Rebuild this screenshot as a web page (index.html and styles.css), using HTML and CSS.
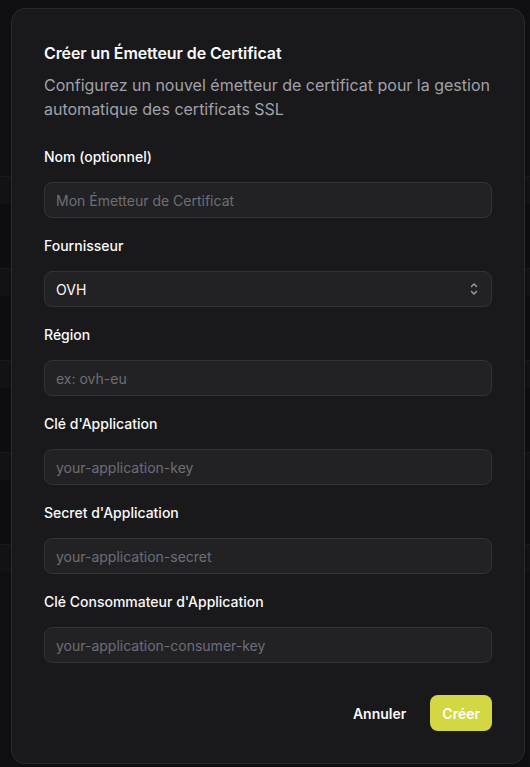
FILE: index.html
```html
<!DOCTYPE html>
<html lang="fr">
<head>
    <meta charset="UTF-8">
    <meta name="viewport" content="width=device-width, initial-scale=1.0">
    <title>Émetteurs de certificats</title>
    <link rel="stylesheet" href="styles.css">
</head>
<body>
    <div class="page">
        <div class="page-row"></div>
        <div class="page-row page-row-dark"></div>
        <div class="page-row"></div>
        <div class="page-row page-row-dark"></div>
        <div class="page-row"></div>
        <div class="page-row page-row-dark"></div>
        <div class="page-row"></div>
        <div class="page-row page-row-dark"></div>
        <div class="page-row"></div>
    </div>

    <div class="overlay">
        <div class="dialog" role="dialog" aria-labelledby="dialog-title">
            <div class="dialog-header">
                <h2 id="dialog-title" class="dialog-title">Créer un Émetteur de Certificat</h2>
                <p class="dialog-description">Configurez un nouvel émetteur de certificat pour la gestion automatique des certificats SSL</p>
            </div>

            <form class="issuer-form" onsubmit="return false">
                <div class="field">
                    <label for="name">Nom (optionnel)</label>
                    <input id="name" type="text" placeholder="Mon Émetteur de Certificat">
                </div>

                <div class="field">
                    <label for="provider">Fournisseur</label>
                    <div class="select">
                        <span>OVH</span>
                        <svg class="select-icon" width="8" height="14" viewBox="0 0 8 14" fill="none" stroke="currentColor" stroke-width="1.4" stroke-linecap="round" stroke-linejoin="round">
                            <path d="M1.5 4.5 4 2l2.5 2.5"/>
                            <path d="M1.5 9.5 4 12l2.5-2.5"/>
                        </svg>
                    </div>
                </div>

                <div class="field">
                    <label for="region">Région</label>
                    <input id="region" type="text" placeholder="ex: ovh-eu">
                </div>

                <div class="field">
                    <label for="app-key">Clé d'Application</label>
                    <input id="app-key" type="text" placeholder="your-application-key">
                </div>

                <div class="field">
                    <label for="app-secret">Secret d'Application</label>
                    <input id="app-secret" type="text" placeholder="your-application-secret">
                </div>

                <div class="field">
                    <label for="consumer-key">Clé Consommateur d'Application</label>
                    <input id="consumer-key" type="text" placeholder="your-application-consumer-key">
                </div>

                <div class="dialog-footer">
                    <button type="button" class="btn btn-ghost">Annuler</button>
                    <button type="submit" class="btn btn-primary">Créer</button>
                </div>
            </form>
        </div>
    </div>
</body>
</html>
```

FILE: styles.css
```css
* {
    margin: 0;
    padding: 0;
    box-sizing: border-box;
}

body {
    font-family: Inter, 'Noto Sans', sans-serif;
    background: #0f0f11;
    color: #fafafa;
    min-height: 100vh;
    overflow: hidden;
}

/* Background page (table rows under the overlay) */
.page {
    padding-top: 176px;
}

.page-row {
    height: 28px;
    border-top: 1px solid #19191b;
    background: #121214;
}

.page-row-dark {
    background: #0d0d0f;
    height: 64px;
    border-top: none;
}

/* Dialog */
.overlay {
    position: fixed;
    inset: 0;
}

.dialog {
    position: absolute;
    top: 8px;
    left: 11px;
    width: 514px;
    background: #19191b;
    border: 1px solid #2a2a2d;
    border-radius: 14px;
    padding: 32px;
}

.dialog-header {
    display: flex;
    flex-direction: column;
    gap: 8px;
}

.dialog-title {
    font-size: 16px;
    font-weight: 600;
    line-height: 24px;
    letter-spacing: -0.1px;
    color: #fafafa;
}

.dialog-description {
    font-size: 16px;
    line-height: 24px;
    color: #a1a1aa;
}

.issuer-form {
    margin-top: 26px;
    display: flex;
    flex-direction: column;
    gap: 18px;
}

.field {
    display: flex;
    flex-direction: column;
    gap: 15px;
}

.field label {
    font-size: 14px;
    font-weight: 500;
    line-height: 20px;
    color: #fafafa;
}

.field input,
.select {
    height: 36px;
    width: 100%;
    background: #222225;
    border: 1px solid #333337;
    border-radius: 8px;
    padding: 0 11px;
    font-family: inherit;
    font-size: 14px;
    color: #fafafa;
    outline: none;
}

.field input::placeholder {
    color: #6e6e76;
}

.select {
    display: flex;
    align-items: center;
    justify-content: space-between;
}

.select-icon {
    color: #9f9fa7;
    margin-right: 2px;
}

.dialog-footer {
    margin-top: 14px;
    display: flex;
    justify-content: flex-end;
    gap: 8px;
}

.btn {
    height: 36px;
    padding: 0 16px;
    border: none;
    border-radius: 8px;
    font-family: inherit;
    font-size: 14px;
    font-weight: 600;
    cursor: pointer;
}

.btn-ghost {
    background: transparent;
    color: #fafafa;
}

.btn-primary {
    background: #d3d743;
    color: #ffffff;
    padding: 0 12px;
}
```
